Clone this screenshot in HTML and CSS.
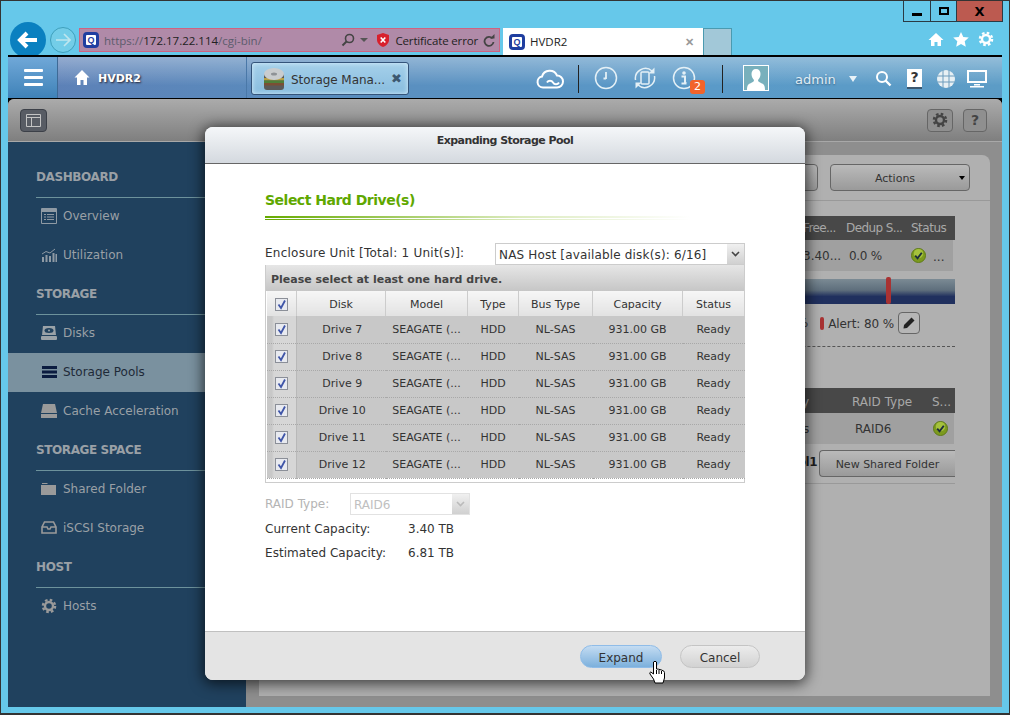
FILE: index.html
```html
<!DOCTYPE html>
<html lang="en">
<head>
    <meta charset="UTF-8">
    <title>HVDR2</title>
    <link rel="stylesheet" href="styles.css">
</head>
<body>
<svg class="defs" width="0" height="0">
    <symbol id="gear" viewBox="0 0 20 20">
        <circle cx="10" cy="10" r="5" fill="none" stroke="currentColor" stroke-width="3"/>
        <circle cx="10" cy="10" r="7.6" fill="none" stroke="currentColor" stroke-width="3" stroke-dasharray="3.2 2.77"/>
    </symbol>
    <symbol id="ok" viewBox="0 0 16 16">
        <circle cx="8" cy="8" r="7.5" fill="#7c9a1e" stroke="#5d7a14"/>
        <circle cx="8" cy="6" r="5" fill="#a5c13c"/>
        <path d="M4.5 8.2 7 11 11.5 5" fill="none" stroke="#1d2c3c" stroke-width="2"/>
    </symbol>
    <symbol id="tick" viewBox="0 0 13 13">
        <rect x=".5" y=".5" width="12" height="12" fill="#e8eaf0" stroke="#8b8f98"/>
        <path d="M3.5 6.5 6 10 10 2.5" fill="none" stroke="#3f55a8" stroke-width="1.8"/>
    </symbol>
</svg>

<div class="window">
    <div class="win-controls">
        <span class="win-btn win-min"><i></i></span>
        <span class="win-btn win-max"><i></i></span>
        <span class="win-btn win-close">X</span>
    </div>

    <div class="browser">
        <span class="back">
            <svg width="22" height="18" viewBox="0 0 22 18"><path d="M10 2 3 9l7 7M3 9h17" fill="none" stroke="#fff" stroke-width="4"/></svg>
        </span>
        <span class="forward">
            <svg width="16" height="14" viewBox="0 0 16 14"><path d="M9 1l6 6-6 6M15 7H1" fill="none" stroke="#bfe6ee" stroke-width="1.6"/></svg>
        </span>
        <div class="address">
            <span class="favicon">Q</span>
            <span class="url">https://<b>172.17.22.114</b>/cgi-bin/</span>
            <svg class="addr-search" width="14" height="14" viewBox="0 0 14 14"><circle cx="8.5" cy="5.5" r="4" fill="none" stroke="#444" stroke-width="1.6"/><path d="M5.5 8.5 1.5 12.5" stroke="#444" stroke-width="2"/></svg>
            <span class="addr-caret"></span>
            <svg class="shield" width="12" height="14" viewBox="0 0 12 14"><path d="M6 0 12 2v5c0 3-3 6-6 7-3-1-6-4-6-7V2z" fill="#d8202c"/><path d="M3.7 4.5 8.3 9.5M8.3 4.5 3.7 9.5" stroke="#fff" stroke-width="1.6"/></svg>
            <span class="cert">Certificate error</span>
            <svg class="addr-reload" width="12" height="13" viewBox="0 0 12 13"><path d="M9.5 4.5A4.5 4.5 0 1 0 10.5 8" fill="none" stroke="#444" stroke-width="1.8"/><path d="M7 4.5h4.5V0z" fill="#444"/></svg>
        </div>
        <div class="tab">
            <span class="favicon">Q</span>
            <span class="tab-title">HVDR2</span>
            <span class="tab-x">✕</span>
        </div>
        <div class="tab-new"></div>
        <div class="tools">
            <svg width="16" height="15" viewBox="0 0 16 15"><path d="M8 1 .5 8H3v6h3.5v-4h3v4H13V8h2.5z" fill="#fff"/></svg>
            <svg width="16" height="15" viewBox="0 0 16 15"><path d="M8 0l2.300 5 5.500.6-4.100 3.700 1.100 5.500L8 12l-4.800 2.800 1.100-5.500L.2 5.600 5.700 5z" fill="#fff"/></svg>
            <svg class="tool-gear" width="16" height="16"><use href="#gear"/></svg>
        </div>
    </div>

    <div class="page">
        <div class="topbar">
            <div class="menu-btn"><i></i><i></i><i></i></div>
            <div class="nas">
                <svg width="16" height="15" viewBox="0 0 16 15"><path d="M8 0 .5 7.5H3V15h3.500v-5h3v5H13V7.5h2.500z" fill="#fff"/></svg>
                <span class="nas-name">HVDR2</span>
            </div>
            <div class="app-tab">
                <svg width="22" height="24" viewBox="0 0 22 24">
                    <rect x="1" y="6" width="20" height="17" rx="3" fill="#5a5a5a"/>
                    <rect x="1" y="11" width="20" height="2.500" fill="#b8a044"/>
                    <rect x="1" y="13.500" width="20" height="2.500" fill="#4f7f3a"/>
                    <rect x="1" y="16" width="20" height="2.500" fill="#7a4f34"/>
                    <ellipse cx="11" cy="7" rx="10" ry="6" fill="#c9ccce"/>
                    <ellipse cx="11" cy="7" rx="3" ry="1.500" fill="#8e9296"/>
                </svg>
                <span class="app-tab-title">Storage Mana...</span>
                <span class="app-tab-x">✖</span>
            </div>
            <div class="top-right">
                <span class="top-cloud">
                    <svg width="28" height="20" viewBox="0 0 28 20"><path d="M7 18.5a5.5 5.5 0 0 1-1-10.900A8 8 0 0 1 21 6.500a6 6 0 0 1 0 12zM11 13.500a3.500 3.500 0 0 1 6 0a3.500 3.500 0 0 0 6 0" fill="none" stroke="#fff" stroke-width="2"/></svg>
                </span>
                <span class="top-sep sep-a"></span>
                <span class="top-cell cell-first">
                    <svg width="24" height="24" viewBox="0 0 24 24"><circle cx="12" cy="12" r="10.5" fill="none" stroke="#e4f0f6" stroke-width="1.5"/><path d="M12 6v7M9.5 12.500h2.500" stroke="#e4f0f6" stroke-width="1.800"/></svg>
                </span>
                <span class="top-cell">
                    <svg width="24" height="24" viewBox="0 0 24 24"><rect x="8" y="6" width="8" height="12" rx="1" fill="none" stroke="#e4f0f6" stroke-width="1.5"/><path d="M2.5 14A10 10 0 0 1 19 5M21.500 10A10 10 0 0 1 5 19" fill="none" stroke="#e4f0f6" stroke-width="1.5"/><path d="M21.500 1.500v6h-6zM2.500 22.500v-6h6z" fill="#e4f0f6"/></svg>
                </span>
                <span class="top-cell">
                    <svg width="24" height="24" viewBox="0 0 24 24"><circle cx="12" cy="12" r="10.5" fill="none" stroke="#e4f0f6" stroke-width="1.5"/><circle cx="12" cy="7" r="1.800" fill="#e4f0f6"/><path d="M9.5 10.500H13V17h1.500M9.500 17.500h5" fill="none" stroke="#e4f0f6" stroke-width="2"/></svg>
                    <span class="badge">2</span>
                </span>
                <span class="top-sep sep-b"></span>
                <span class="avatar">
                    <svg width="24" height="24" viewBox="0 0 24 24"><path d="M12 3c3 0 4.500 2 4.500 5 0 3-1.500 5-2.500 6 0 1.500 1 2 3 3 2.500 1 4 2 4 7H3c0-5 1.500-6 4-7 2-1 3-1.500 3-3-1-1-2.500-3-2.500-6 0-3 1.500-5 4.500-5z" fill="#fff"/></svg>
                </span>
                <span class="user">admin</span>
                <span class="user-caret"></span>
                <span class="top-small cell-search">
                    <svg width="17" height="17" viewBox="0 0 17 17"><circle cx="7" cy="7" r="5" fill="none" stroke="#fff" stroke-width="2"/><path d="M10.500 10.500 15.500 15.500" stroke="#fff" stroke-width="2.400"/></svg>
                </span>
                <span class="top-small">
                    <span class="help-book">?</span>
                </span>
                <span class="top-small">
                    <svg width="20" height="20" viewBox="0 0 20 20"><circle cx="10" cy="10" r="9" fill="#e8f0f4"/><path d="M1 7h18M1 13h18M7 1v18M13 1v18" stroke="#6d9cbd" stroke-width="1"/></svg>
                </span>
                <span class="top-small">
                    <svg width="20" height="18" viewBox="0 0 20 18"><rect x="1" y="1" width="18" height="11" fill="none" stroke="#fff" stroke-width="2"/><path d="M7 14h6v1.500H7zM3 16h14v1.500H3z" fill="#fff"/></svg>
                </span>
            </div>
        </div>

        <div class="app">
            <div class="app-head">
                <span class="layout-btn">
                    <svg width="15" height="13" viewBox="0 0 15 13"><path d="M.5.500h14v12H.5zM.5 3.500h14M5.500 3.500v9" fill="none" stroke="#c4c4c4"/></svg>
                </span>
                <span class="head-btn head-gear"><svg width="16" height="16"><use href="#gear"/></svg></span>
                <span class="head-btn head-help">?</span>
            </div>
            <div class="app-body">
                <nav class="sidebar">
                    <div class="side-head">DASHBOARD</div>
                    <a class="side-item">
                        <svg width="16" height="16" viewBox="0 0 16 16"><path d="M.5.500h15v15H.5z" fill="none" stroke="#8f9aa4"/><path d="M1 1h14v3H1zM3 6h2v1H3zM6 6h7v1H6zM3 8.500h2v1H3zM6 8.500h7v1H6zM3 11h2v1H3zM6 11h7v1H6z" fill="#8f9aa4"/></svg>
                        Overview
                    </a>
                    <a class="side-item">
                        <svg width="16" height="14" viewBox="0 0 16 14"><path d="M1 9h2v5H1zM4.500 7h2v7h-2zM8 8h2v6H8zM11.500 5h2v9h-2zM14.500 6H16v8h-1.500z" fill="#8f9aa4"/><path d="M1 6 5 3.500 9 5l5-4" fill="none" stroke="#8f9aa4"/></svg>
                        Utilization
                    </a>
                    <div class="side-head">STORAGE</div>
                    <a class="side-item">
                        <svg width="16" height="14" viewBox="0 0 16 14"><path d="M2 0h12l1 9H1z" fill="#9aa2a8"/><ellipse cx="8" cy="4.500" rx="4.500" ry="2.500" fill="#20415e"/><circle cx="8" cy="4.500" r="1" fill="#9aa2a8"/><rect x="0" y="10" width="16" height="4" rx="1" fill="#9aa2a8"/></svg>
                        Disks
                    </a>
                    <a class="side-item side-active">
                        <svg width="16" height="12" viewBox="0 0 16 12"><path d="M1 0h15v3H1zM1 4.500h15v3H1zM1 9h15v3H1z" fill="#0b1c40"/></svg>
                        Storage Pools
                    </a>
                    <a class="side-item">
                        <svg width="16" height="14" viewBox="0 0 16 14"><path d="M2 0h12l2 9H0z" fill="#9a9a9a"/><rect y="10" width="16" height="4" fill="#9a9a9a"/></svg>
                        Cache Acceleration
                    </a>
                    <div class="side-head">STORAGE SPACE</div>
                    <a class="side-item">
                        <svg width="16" height="13" viewBox="0 0 16 13"><path d="M1 2V1h5l1 1zM0 3h15v10H0z" fill="#9a9a9a"/></svg>
                        Shared Folder
                    </a>
                    <a class="side-item">
                        <svg width="16" height="13" viewBox="0 0 16 13"><path d="M3.500 1h9L15 6v6H1V6zM1 6h5l1 2h2l1-2h5" fill="none" stroke="#9a9a9a" stroke-width="1.600"/></svg>
                        iSCSI Storage
                    </a>
                    <div class="side-head">HOST</div>
                    <a class="side-item">
                        <svg class="side-gear" width="16" height="16"><use href="#gear"/></svg>
                        Hosts
                    </a>
                </nav>

                <main class="content">
                    <div class="panel">
                        <div class="toolbar">
                            <span class="tool-btn btn-hidden"></span>
                            <span class="tool-btn btn-actions">Actions<i class="actions-caret"></i></span>
                        </div>
                        <div class="pool-view">
                            <div class="grid-head">
                                <span class="c-free">Free...</span>
                                <span class="c-dedup">Dedup S...</span>
                                <span class="c-status">Status</span>
                            </div>
                            <div class="grid-row row-a">
                                <span class="c-free">3.40...</span>
                                <span class="c-dedup c-dedup-val">0.0 %</span>
                                <span class="c-status"><svg width="15" height="15"><use href="#ok"/></svg><em>...</em></span>
                            </div>
                            <div class="usage-bar"><span class="usage-mark"></span></div>
                            <div class="alert-row">
                                <span class="alert-pct">%</span>
                                <span class="alert-pill"></span>
                                <span class="alert-text">Alert: 80 %</span>
                                <span class="edit-btn">
                                    <svg width="12" height="12" viewBox="0 0 12 12"><path d="M8.500.5l3 3L4 11 .5 11.500 1 8z" fill="#222"/></svg>
                                </span>
                            </div>
                            <div class="dashed"></div>
                            <div class="grid-head head-two">
                                <span class="c-cap">y</span>
                                <span class="c-raid">RAID Type</span>
                                <span class="c-s">S...</span>
                            </div>
                            <div class="grid-row row-b">
                                <span class="c-cap">s</span>
                                <span class="c-raid c-raid-val">RAID6</span>
                                <span class="c-s c-s-val"><svg width="15" height="15"><use href="#ok"/></svg></span>
                            </div>
                            <div class="folder-row">
                                <b>ol1</b>
                                <span class="folder-btn">New Shared Folder</span>
                            </div>
                        </div>
                    </div>
                </main>
            </div>
        </div>
    </div>

    <div class="dialog">
        <div class="dlg-head">Expanding Storage Pool</div>
        <div class="dlg-body">
            <h2 class="dlg-title">Select Hard Drive(s)</h2>
            <div class="dlg-rule"></div>
            <div class="enclosure">
                <label class="enc-label">Enclosure Unit [Total: 1 Unit(s)]:</label>
                <div class="select enc-select">
                    <span>NAS Host [available disk(s): 6/16]</span>
                    <i class="select-arrow"><svg width="9" height="6" viewBox="0 0 9 6"><path d="M1 1l3.500 3.500L8 1" fill="none" stroke="#444" stroke-width="1.600"/></svg></i>
                </div>
            </div>
            <div class="drives">
                <div class="drives-title">Please select at least one hard drive.</div>
                <table class="drive-table">
                    <colgroup>
                        <col class="col-check"><col class="col-disk"><col class="col-model"><col class="col-type"><col class="col-bus"><col class="col-cap"><col class="col-status">
                    </colgroup>
                    <thead>
                        <tr>
                            <th><svg class="tick" width="13" height="13"><use href="#tick"/></svg></th>
                            <th>Disk</th><th>Model</th><th>Type</th><th>Bus Type</th><th>Capacity</th><th>Status</th>
                        </tr>
                    </thead>
                    <tbody>
                        <tr><td class="td-check"><svg class="tick" width="13" height="13"><use href="#tick"/></svg></td><td class="td-disk">Drive 7</td><td>SEAGATE (...</td><td>HDD</td><td>NL-SAS</td><td>931.00 GB</td><td>Ready</td></tr>
                        <tr><td class="td-check"><svg class="tick" width="13" height="13"><use href="#tick"/></svg></td><td class="td-disk">Drive 8</td><td>SEAGATE (...</td><td>HDD</td><td>NL-SAS</td><td>931.00 GB</td><td>Ready</td></tr>
                        <tr><td class="td-check"><svg class="tick" width="13" height="13"><use href="#tick"/></svg></td><td class="td-disk">Drive 9</td><td>SEAGATE (...</td><td>HDD</td><td>NL-SAS</td><td>931.00 GB</td><td>Ready</td></tr>
                        <tr><td class="td-check"><svg class="tick" width="13" height="13"><use href="#tick"/></svg></td><td class="td-disk">Drive 10</td><td>SEAGATE (...</td><td>HDD</td><td>NL-SAS</td><td>931.00 GB</td><td>Ready</td></tr>
                        <tr><td class="td-check"><svg class="tick" width="13" height="13"><use href="#tick"/></svg></td><td class="td-disk">Drive 11</td><td>SEAGATE (...</td><td>HDD</td><td>NL-SAS</td><td>931.00 GB</td><td>Ready</td></tr>
                        <tr><td class="td-check"><svg class="tick" width="13" height="13"><use href="#tick"/></svg></td><td class="td-disk">Drive 12</td><td>SEAGATE (...</td><td>HDD</td><td>NL-SAS</td><td>931.00 GB</td><td>Ready</td></tr>
                    </tbody>
                </table>
            </div>
            <div class="raid-row">
                <label class="raid-label">RAID Type:</label>
                <div class="select raid-select">
                    <span>RAID6</span>
                    <i class="select-arrow"><svg width="9" height="6" viewBox="0 0 9 6"><path d="M1 1l3.500 3.500L8 1" fill="none" stroke="#bbb" stroke-width="1.600"/></svg></i>
                </div>
            </div>
            <div class="info-row"><span class="info-label">Current Capacity:</span><span>3.40 TB</span></div>
            <div class="info-row"><span class="info-label">Estimated Capacity:</span><span>6.81 TB</span></div>
        </div>
        <div class="dlg-foot">
            <button class="pill pill-blue">Expand</button>
            <button class="pill">Cancel</button>
        </div>
    </div>

    <svg class="hand" width="17" height="24" viewBox="0 0 17 24">
        <path d="M4.500 2Q6 .5 7.500 2V9l2 .2 3 .8q3 .8 3 2.500V18l-1.500 5H6l-1.500-4L1 14q-.8-1.500.8-2l2.700 2z" fill="#fff" stroke="#000"/>
        <path d="M7.500 10v4M10 10v4M12.500 11v3" stroke="#000" fill="none"/>
    </svg>
</div>
</body>
</html>
```

FILE: styles.css
```css
* {
    box-sizing: border-box;
}
html, body {
    margin: 0;
    padding: 0;
}
body {
    font-family: "DejaVu Sans", Verdana, sans-serif;
    font-size: 12px;
    color: #333;
}
.defs {
    position: absolute;
}
svg {
    display: block;
}
.window {
    position: relative;
    width: 1010px;
    height: 715px;
    overflow: hidden;
    background-color: #66c8ea;
    border: 1px solid #333;
    border-bottom-width: 2px;
    padding: 0 7px;
}

/* window buttons */
.win-controls {
    display: flex;
    justify-content: flex-end;
    height: 21px;
    margin-right: -1px;
}
.win-btn {
    display: flex;
    align-items: center;
    justify-content: center;
    height: 21px;
    border: 1px solid #2a3a44;
    border-top: none;
    border-left: none;
    color: #000;
    font-weight: bold;
    font-size: 13px;
}
.win-min {
    width: 28px;
    border-left: 1px solid #2a3a44;
}
.win-max {
    width: 26px;
}
.win-close {
    width: 46px;
    background-color: #bc5a50;
}
.win-min i {
    display: block;
    width: 10px;
    height: 3px;
    margin-top: 6px;
    background-color: #000;
}
.win-max i {
    display: block;
    width: 10px;
    height: 8px;
    border: 2px solid #000;
}

/* browser row */
.browser {
    display: flex;
    height: 33px;
    margin-left: -7px;
    margin-right: -7px;
    padding-left: 9px;
}
.back {
    display: flex;
    align-items: center;
    justify-content: center;
    flex: none;
    width: 36px;
    height: 36px;
    border-radius: 50%;
    background-color: #0a80c0;
}
.forward {
    display: flex;
    align-items: center;
    justify-content: center;
    flex: none;
    width: 26px;
    height: 26px;
    margin: 5px 0 0 4px;
    border-radius: 50%;
    border: 1px solid #3fa0bc;
    background-color: #73cde8;
}
.address {
    display: flex;
    align-items: center;
    flex: none;
    width: 421px;
    height: 24px;
    margin: 6px 0 0 3px;
    padding: 0 4px 0 3px;
    background-color: #b08aa8;
    border: 1px solid #cf6380;
    font-size: 11.5px;
    font-family: "Open Sans", sans-serif;
    color: #5c5c6c;
}
.favicon {
    display: flex;
    align-items: center;
    justify-content: center;
    flex: none;
    width: 16px;
    height: 16px;
    border-radius: 4px;
    border: 3px solid #1f3ea0;
    background-color: #fff;
    color: #1f3ea0;
    font: bold 9px "Liberation Sans", sans-serif;
}
.url {
    margin-left: 5px;
    flex: 1;
}
.url b {
    font-weight: normal;
    color: #222;
}
.addr-search {
    margin-right: 5px;
}
.addr-caret {
    width: 0;
    height: 0;
    margin-right: 9px;
    border: 4px solid transparent;
    border-top-color: #555;
    border-bottom: none;
}
.cert {
    margin: 0 5px 0 6px;
    color: #222;
    letter-spacing: -.15px;
}
.tab {
    display: flex;
    align-items: center;
    flex: none;
    width: 200px;
    height: 27px;
    margin: 6px 0 0 3px;
    padding: 0 9px 0 6px;
    background-color: #fff;
    font-family: "Open Sans", sans-serif;
    color: #222;
}
.tab-title {
    flex: 1;
    margin-left: 5px;
    font-size: 11.5px;
}
.tab-x {
    color: #999;
    font-size: 11px;
    font-weight: bold;
}
.tab-new {
    flex: none;
    width: 29px;
    height: 27px;
    margin-top: 6px;
    background-color: #a2c8d8;
    border: 1px solid #4a9ab0;
    border-bottom: none;
}
.tools {
    display: flex;
    align-items: center;
    gap: 9px;
    height: 16px;
    margin: 9px 0 0 auto;
    padding-right: 15px;
}
.tool-gear {
    color: #fff;
}

/* page */
.page {
    position: relative;
    height: 652px;
    background-color: #000;
}
.topbar {
    display: flex;
    align-items: stretch;
    height: 43px;
    border-top: 2px solid #000;
    background: linear-gradient(to bottom, rgba(255,255,255,.34), rgba(255,255,255,0) 70%),
        linear-gradient(to right, #5d7fb6, #5a8cbd 30%, #5a9ac8 70%, #5c9cc6);
}
.menu-btn {
    display: flex;
    flex-direction: column;
    justify-content: center;
    gap: 4px;
    flex: none;
    width: 50px;
    padding: 0 14px 0 16px;
    border-right: 1px solid #3e6a96;
    background: linear-gradient(to bottom, #70a8d8, #3f82b8);
}
.menu-btn i {
    display: block;
    height: 3px;
    border-radius: 1px;
    background-color: #fff;
}
.nas {
    display: flex;
    align-items: center;
    gap: 8px;
    flex: none;
    width: 189px;
    padding-left: 16px;
    border-right: 1px solid #4a78a8;
}
.nas-name {
    padding-top: 2px;
    color: #fff;
    font-weight: bold;
    font-size: 11px;
    text-shadow: 1px 1px 2px #223;
}
.app-tab {
    display: flex;
    align-items: center;
    flex: none;
    width: 158px;
    height: 33px;
    margin: 5px 0 0 4px;
    padding: 0 6px 0 11px;
    border: 1px solid #34547a;
    border-radius: 3px;
    background: linear-gradient(to bottom, #a5d0ea, #88bcde);
    box-shadow: inset 0 0 5px #d8eef9;
}
.app-tab-title {
    flex: 1;
    margin-left: 6px;
    padding-top: 2px;
    font-size: 12px;
    letter-spacing: -.05px;
    color: #333;
    white-space: nowrap;
}
.app-tab-x {
    font-size: 13px;
    color: #3c5870;
}
.top-right {
    display: flex;
    align-items: center;
    margin-left: auto;
    padding-right: 10px;
}
.top-cloud {
    flex: none;
    width: 28px;
    margin-top: 3px;
}
.top-sep {
    flex: none;
    width: 1px;
    height: 28px;
    margin-top: 2px;
    background-color: #222;
}
.sep-a {
    margin-left: 14px;
    margin-right: 7px;
}
.sep-b {
    margin-left: 19px;
    margin-right: 20px;
}
.top-cell {
    position: relative;
    display: flex;
    justify-content: center;
    flex: none;
    width: 39px;
}
.badge {
    position: absolute;
    top: 14px;
    left: 26px;
    width: 15px;
    height: 14px;
    border-radius: 3px;
    background-color: #f2632a;
    color: #fff;
    font-size: 11px;
    line-height: 14px;
    text-align: center;
}
.avatar {
    display: flex;
    flex: none;
    align-items: flex-end;
    justify-content: center;
    width: 26px;
    height: 26px;
    border: 1px solid #fff;
    background-color: #78b0bc;
}
.user {
    flex: none;
    width: 43px;
    margin-top: 4px;
    margin-left: 26px;
    font-size: 13px;
    color: #e0eef6;
    text-shadow: 0 1px 2px #36607e;
    white-space: nowrap;
}
.user-caret {
    flex: none;
    width: 0;
    height: 0;
    margin: 2px 0 0 11px;
    border: 4px solid transparent;
    border-top: 6px solid #e8f2f8;
    border-bottom: none;
}
.top-small {
    display: flex;
    justify-content: center;
    flex: none;
    width: 31px;
    margin-top: 2px;
}
.cell-search {
    margin-left: 11px;
}
.help-book {
    width: 15px;
    height: 20px;
    background-color: #fff;
    border-bottom: 2px solid #3c5870;
    color: #333;
    font-weight: bold;
    font-size: 14px;
    line-height: 17px;
    text-align: center;
}

/* dimmed app behind the dialog */
.app {
    height: 608px;
    margin-top: 1px;
    overflow: hidden;
    border-radius: 6px 6px 0 0;
    background-color: #8e8e8e;
}
.app-head {
    display: flex;
    align-items: center;
    height: 43px;
    padding: 0 15px 0 12px;
    background: linear-gradient(to bottom, #ababab, #7f7f7f);
    border-bottom: 1px solid #a8a8a8;
}
.layout-btn {
    display: flex;
    align-items: center;
    justify-content: center;
    width: 27px;
    height: 23px;
    margin-right: auto;
    border: 1px solid #3c4048;
    border-radius: 4px;
    background-color: #585c64;
}
.head-btn {
    display: flex;
    align-items: center;
    justify-content: center;
    height: 23px;
    border: 1px solid #666;
    border-radius: 4px;
    color: #444;
    font-weight: bold;
    font-size: 14px;
    background-color: #8f8f8f;
}
.head-gear {
    width: 26px;
    margin-right: 10px;
}
.head-help {
    width: 24px;
}
.app-body {
    display: flex;
    height: 565px;
}

/* sidebar */
.sidebar {
    flex: none;
    width: 238px;
    padding-top: 16px;
    background-color: #20415e;
    color: #9aa0a6;
}
.side-head {
    display: flex;
    align-items: center;
    height: 39px;
    margin-left: 28px;
    padding-bottom: 2px;
    box-shadow: 0 1px 0 #6d929c;
    font-weight: bold;
    letter-spacing: -.4px;
}
.side-item {
    display: flex;
    align-items: center;
    gap: 6px;
    height: 39px;
    padding-left: 33px;
    padding-bottom: 2px;
}
.side-active {
    background-color: #7a919f;
    color: #1e2a38;
}
.side-gear {
    color: #9a9a9a;
}

/* right side */
.content {
    flex: 1;
    padding: 13px 12px 12px 13px;
}
.panel {
    height: 541px;
    border-radius: 8px 8px 0 0;
    background-color: #b0b0b0;
}
.toolbar {
    display: flex;
    justify-content: flex-end;
    gap: 12px;
    height: 46px;
    padding: 9px 20px 0 0;
    border-bottom: 1px solid #999;
}
.tool-btn {
    position: relative;
    height: 27px;
    padding-right: 10px;
    border: 1px solid #666;
    border-radius: 4px;
    background: linear-gradient(to bottom, #bababa, #9a9a9a);
    text-align: center;
    line-height: 27px;
    font-size: 11px;
}
.btn-hidden {
    width: 100px;
}
.btn-actions {
    width: 140px;
}
.actions-caret {
    position: absolute;
    top: 11px;
    right: 4px;
    border: 3px solid transparent;
    border-top: 4px solid #000;
    border-bottom: none;
}
.pool-view {
    margin-right: 35px;
    padding-top: 15px;
}
.grid-head {
    display: flex;
    justify-content: flex-end;
    align-items: center;
    height: 24px;
    background-color: #484848;
    color: #a8a8a8;
    white-space: nowrap;
}
.grid-row {
    display: flex;
    justify-content: flex-end;
    align-items: center;
    height: 31px;
    margin-right: 2px;
    background-color: #a0a0a0;
    white-space: nowrap;
}
.c-free {
    width: 43px;
}
.grid-head .c-free {
    letter-spacing: -.6px;
}
.c-dedup {
    width: 65px;
}
.grid-head .c-dedup {
    letter-spacing: -.6px;
}
.c-dedup-val {
    padding-left: 3px;
    letter-spacing: -.3px;
}
.c-status {
    display: flex;
    align-items: center;
    width: 42px;
}
.c-status em {
    margin: 2px 0 0 7px;
    font-style: normal;
}
.grid-head .c-status {
    width: 44px;
    letter-spacing: -.5px;
}
.usage-bar {
    position: relative;
    height: 25px;
    margin-top: 8px;
    background: linear-gradient(to bottom, #7b8a94, #5e6e7c 45%, #20305e 70%, #20305e);
}
.usage-mark {
    position: absolute;
    top: -2px;
    right: 64px;
    width: 5px;
    height: 27px;
    border-radius: 2px;
    background-color: #a83232;
}
.alert-row {
    display: flex;
    justify-content: flex-end;
    align-items: center;
    height: 22px;
    margin-top: 8px;
    padding-right: 35px;
}
.alert-pct {
    margin-right: 12px;
}
.alert-pill {
    width: 4px;
    height: 13px;
    margin-right: 4px;
    border-radius: 2px;
    background-color: #a83232;
}
.alert-text {
    margin-right: 4px;
    padding-top: 2px;
    letter-spacing: -.1px;
}
.edit-btn {
    display: flex;
    align-items: center;
    justify-content: center;
    width: 22px;
    height: 22px;
    border: 1px solid #666;
    border-radius: 4px;
    background-color: #b6b6b6;
}
.dashed {
    margin-top: 12px;
    border-top: 1px dashed #555;
}
.head-two {
    height: 25px;
    margin-top: 41px;
    padding-top: 2px;
}
.c-cap {
    flex: none;
    width: 50px;
}
.c-raid {
    flex: none;
    width: 80px;
}
.c-raid-val {
    padding-left: 2px;
}
.c-s {
    flex: none;
    width: 23px;
}
.row-b {
    margin-right: 1px;
}
.c-s-val {
    width: 21px;
}
.folder-row {
    display: flex;
    justify-content: flex-end;
    gap: 2px;
    height: 40px;
    padding-top: 6px;
    border-bottom: 1px solid #999;
    overflow: hidden;
}
.folder-row b {
    padding-top: 5px;
    letter-spacing: -.5px;
    color: #1e1e1e;
}
.folder-btn {
    flex: none;
    width: 136px;
    height: 27px;
    border: 1px solid #666;
    border-right: none;
    border-radius: 4px 0 0 4px;
    background: linear-gradient(to bottom, #bababa, #9a9a9a);
    text-align: center;
    line-height: 27px;
    font-size: 11px;
}

/* dialog */
.dialog {
    position: absolute;
    top: 126px;
    left: 204px;
    display: flex;
    flex-direction: column;
    width: 600px;
    height: 553px;
    border-radius: 8px;
    overflow: hidden;
    background-color: #fff;
    box-shadow: 0 2px 14px 2px rgba(0,0,0,.65);
}
.dlg-head {
    flex: none;
    height: 37px;
    padding-top: 7px;
    background: linear-gradient(to bottom, #f5f7f9, #d4d9df);
    border-bottom: 1px solid #666;
    color: #333;
    font-weight: bold;
    font-size: 11px;
    letter-spacing: -.55px;
    text-align: center;
}
.dlg-body {
    flex: 1;
    padding: 0 60px;
    color: #333;
}
.dlg-title {
    margin: 0;
    padding-top: 28px;
    height: 52px;
    color: #5fa800;
    font-size: 14px;
    font-weight: bold;
    letter-spacing: -.5px;
}
.dlg-rule {
    width: 425px;
    height: 4px;
    border-top: 2px solid #66aa00;
    border-bottom: 1px solid #66aa00;
    border-image: linear-gradient(to right, #66aa00, #dcebbf 60%, transparent) 1;
}
.enclosure {
    display: flex;
    align-items: center;
    height: 22px;
    margin-top: 23px;
}
.enc-label {
    flex: none;
    width: 230px;
    padding-bottom: 2px;
    letter-spacing: .24px;
}
.select {
    display: flex;
    align-items: center;
    height: 22px;
    border: 1px solid #ccc;
    background-color: #fff;
    white-space: nowrap;
}
.select span {
    flex: 1;
    padding: 1px 0 0 3px;
}
.select-arrow {
    display: flex;
    align-items: center;
    justify-content: center;
    flex: none;
    width: 17px;
    height: 100%;
    background: linear-gradient(to bottom, #f0f0f0, #d0d0d0);
}
.enc-select {
    width: 250px;
    letter-spacing: .17px;
}
.drives {
    width: 480px;
    height: 218px;
    border: 1px solid #ccc;
    border-top: none;
}
.drives-title {
    height: 26px;
    padding-left: 5px;
    background: linear-gradient(to bottom, #e6e6e6, #c6c6c6);
    font-size: 11px;
    font-weight: bold;
    line-height: 29px;
    color: #444;
}
.drive-table {
    width: 478px;
    border-collapse: collapse;
    table-layout: fixed;
    font-size: 11px;
}
.col-check { width: 30px; }
.col-disk { width: 89px; }
.col-model { width: 82px; }
.col-type { width: 51px; }
.col-bus { width: 74px; }
.col-cap { width: 90px; }
.col-status { width: 62px; }
.drive-table th {
    height: 25px;
    padding: 2px 0 0;
    border-right: 1px solid #ccc;
    border-left: 1px solid #fff;
    background: linear-gradient(to bottom, #f6f6f6, #e2e2e2);
    font-weight: normal;
    text-align: center;
}
.drive-table td {
    height: 27px;
    padding: 0;
    background-color: #c8c8c8;
    border-bottom: 1px dotted #a8a8a8;
    text-align: center;
    white-space: nowrap;
}
.drive-table .td-disk {
    padding-left: 2px;
}
.drive-table .td-check {
    background: linear-gradient(to right, #c8c8c8 5px, #d6d6d6 7px);
    border-right: 1px solid #b8b8b8;
}
.tick {
    margin: 0 auto;
}
.raid-row {
    display: flex;
    align-items: center;
    height: 22px;
    margin-top: 10px;
    color: #b4b4b4;
}
.raid-label {
    flex: none;
    width: 85px;
}
.raid-select {
    width: 120px;
    border-color: #e2e2e2;
    color: #c0c0c0;
}
.info-row {
    display: flex;
    align-items: center;
    height: 24px;
    margin-top: 2px;
}
.info-row + .info-row {
    margin-top: 0;
}
.info-label {
    flex: none;
    width: 143px;
    letter-spacing: .05px;
}
.dlg-foot {
    display: flex;
    justify-content: flex-end;
    gap: 18px;
    flex: none;
    height: 49px;
    padding: 13px 45px 0 0;
    border-top: 1px solid #c0c0c0;
    background-color: #e4e4e4;
}
.pill {
    width: 80px;
    height: 23px;
    padding: 2px 0 0;
    border: 1px solid #c4c4c4;
    border-radius: 12px;
    background: linear-gradient(to bottom, #ececec, #d2d2d2);
    color: #333;
    font: 12px "DejaVu Sans", sans-serif;
}
.pill-blue {
    width: 82px;
    border-color: #8fbce8;
    background: linear-gradient(to bottom, #c4dcf2, #7cb0dc);
}
.hand {
    position: absolute;
    top: 659px;
    left: 648px;
}
```
